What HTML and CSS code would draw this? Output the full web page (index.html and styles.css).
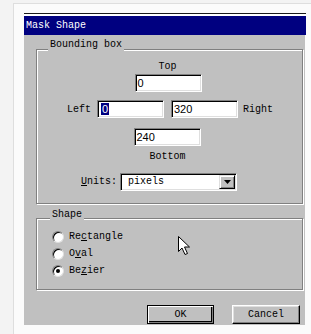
FILE: index.html
```html
<!DOCTYPE html>
<html>
<head>
<meta charset="utf-8">
<link rel="stylesheet" href="styles.css">
</head>
<body>
<div class="panel">
  <div class="dialog">
    <div class="titlebar"><div class="title">Mask Shape</div></div>
    <div class="dbody">
      <div class="group bbox">
        <div class="legend lg1">Bounding box</div>
        <div class="coords">
          <div class="stack">
            <div class="lbl">Top</div>
            <div class="field w-top"><span class="val">0</span></div>
          </div>
          <div class="mid">
            <div class="lbl side-left">Left</div>
            <div class="field w-in"><span class="val sel">0</span></div>
            <div class="field w-in"><span class="val">320</span></div>
            <div class="lbl side-right">Right</div>
          </div>
          <div class="stack">
            <div class="field w-bot"><span class="val">240</span></div>
            <div class="lbl blbl">Bottom</div>
          </div>
        </div>
        <div class="units">
          <div class="lbl"><u>U</u>nits:</div>
          <div class="combo">
            <span class="ctext">pixels</span>
            <span class="dropbtn"><svg width="7" height="4" viewBox="0 0 7 4"><path d="M0 0H7L3.5 4Z" fill="#000"/></svg></span>
          </div>
        </div>
      </div>
      <div class="group shape">
        <div class="legend lg2">Shape</div>
        <div class="radios">
          <div class="rrow"><span class="radio"></span><span class="lbl">Re<u>c</u>tangle</span></div>
          <div class="rrow"><span class="radio"></span><span class="lbl">O<u>v</u>al</span></div>
          <div class="rrow"><span class="radio on"></span><span class="lbl">Be<u>z</u>ier</span></div>
        </div>
        <svg class="cursor" width="13" height="20" viewBox="0 0 13 20"><path d="M0.5 0.5L0.5 15.5L4 12L7 18.5L9.5 17.5L6.5 11L11.5 11Z" fill="#fff" stroke="#000" stroke-width="1" stroke-linejoin="miter"/></svg>
      </div>
      <div class="buttons">
        <div class="btn def"><span>OK</span></div>
        <div class="btn"><span>Cancel</span></div>
      </div>
    </div>
  </div>
</div>
</body>
</html>
```
FILE: styles.css
```css
html, body {
  margin: 0;
  padding: 0;
}
body {
  background: #f3f3f3;
  width: 311px;
  height: 334px;
  overflow: hidden;
  padding: 3px 0 0 13px;
  box-sizing: border-box;
  font-family: "Liberation Mono", monospace;
  font-size: 10px;
  line-height: 12px;
  color: #000;
}
.panel {
  background: #fbfbfb;
  border-left: 1px solid #dedede;
  border-top: 1px solid #dedede;
  height: 340px;
  padding: 9px 0 0 10px;
  box-sizing: border-box;
}
.dialog {
  width: 282px;
}
.titlebar {
  border-top: 1px solid #1a1a1a;
  padding-top: 2px;
  background: #fff;
}
.title {
  background: #000080;
  color: #fff;
  height: 19px;
  line-height: 19px;
  padding-left: 2px;
  font-size: 10px;
}
.dbody {
  background: #c0c0c0;
  width: 281px;
  height: 290px;
  padding: 14px 0 0 12px;
  box-sizing: border-box;
}
.group {
  position: relative;
  width: 267px;
  border: 1px solid #808080;
  box-shadow: inset 1px 1px 0 #fff, 1px 1px 0 #fff;
  box-sizing: border-box;
}
.legend {
  display: block;
  width: max-content;
  background: #c0c0c0;
  height: 12px;
  line-height: 12px;
  padding: 0 2px;
  margin-top: -11px;
}
.lg1 { margin-left: 11px; }
.lg2 { margin-left: 13px; margin-top: -10px; }
.bbox { padding-bottom: 12px; }
.lbl { line-height: 12px; white-space: nowrap; }
.coords {
  margin-top: 10px;
  margin-left: 60px;
  width: 141px;
  display: flex;
  flex-direction: column;
}
.stack {
  display: flex;
  flex-direction: column;
  align-items: center;
}
.stack .field { margin-top: 1px; }
.mid {
  position: relative;
  display: flex;
  gap: 7px;
  margin: 8px 0 9px;
}
.side-left {
  position: absolute;
  left: -30px;
  top: 4px;
}
.side-right {
  position: absolute;
  left: 146px;
  top: 4px;
}
.blbl { margin-top: 5px; }
.field {
  height: 18px;
  background: #fff;
  border: 1px solid;
  border-color: #808080 #fff #fff #808080;
  box-shadow: inset 1px 1px 0 #000, inset -1px -1px 0 #dfdfdf;
  box-sizing: border-box;
  display: flex;
  align-items: center;
  padding-left: 2px;
  font-family: "Liberation Sans", Arial, sans-serif;
  font-size: 11px;
}
.w-top { width: 67px; margin-left: 1px; }
.w-in { width: 67px; }
.w-bot { width: 67px; margin-left: -1px; }
.val { line-height: 12px; }
.sel {
  background: #000080;
  color: #fff;
  padding: 0 1px;
  margin-left: 1px;
}
.units {
  display: flex;
  align-items: center;
  gap: 3px;
  margin-top: 10px;
  margin-left: 44px;
}
.combo {
  width: 117px;
  height: 18px;
  background: #fff;
  border: 1px solid;
  border-color: #808080 #fff #fff #808080;
  box-shadow: inset 1px 1px 0 #000, inset -1px -1px 0 #dfdfdf;
  box-sizing: border-box;
  display: flex;
  align-items: center;
  padding: 1px 1px 1px 7px;
}
.ctext { flex: 1; line-height: 12px; }
.dropbtn {
  width: 16px;
  height: 14px;
  background: #c0c0c0;
  border: 1px solid;
  border-color: #dfdfdf #000 #000 #dfdfdf;
  box-shadow: inset 1px 1px 0 #fff, inset -1px -1px 0 #808080;
  box-sizing: border-box;
  display: flex;
  align-items: center;
  justify-content: center;
}
.shape {
  margin-top: 14px;
  padding-bottom: 10px;
}
.radios {
  margin-top: 7px;
  margin-left: 15px;
}
.rrow {
  height: 17px;
  display: flex;
  align-items: center;
  gap: 5px;
}
.radio {
  width: 12px;
  height: 12px;
  border-radius: 50%;
  background: #fff;
  border: 1px solid;
  border-color: #808080 #dfdfdf #dfdfdf #808080;
  box-shadow: inset 1px 1px 0 #000;
  box-sizing: border-box;
  display: flex;
  align-items: center;
  justify-content: center;
}
.radio.on::after {
  content: "";
  width: 4px;
  height: 4px;
  border-radius: 50%;
  background: #000;
}
.cursor {
  position: absolute;
  left: 141px;
  top: 17px;
}
.buttons {
  display: flex;
  gap: 18px;
  margin-top: 15px;
  margin-left: 111px;
}
.btn {
  width: 68px;
  height: 19px;
  background: #c0c0c0;
  border: 1px solid;
  border-color: #fff #000 #000 #fff;
  box-shadow: inset -1px -1px 0 #808080, inset 1px 1px 0 #dfdfdf;
  box-sizing: border-box;
  display: flex;
  align-items: center;
  justify-content: center;
  line-height: 12px;
}
.btn.def {
  width: 67px;
  border: 1px solid #000;
  box-shadow: inset 1px 1px 0 #fff, inset -1px -1px 0 #808080, inset -2px -2px 0 #000;
}
```
